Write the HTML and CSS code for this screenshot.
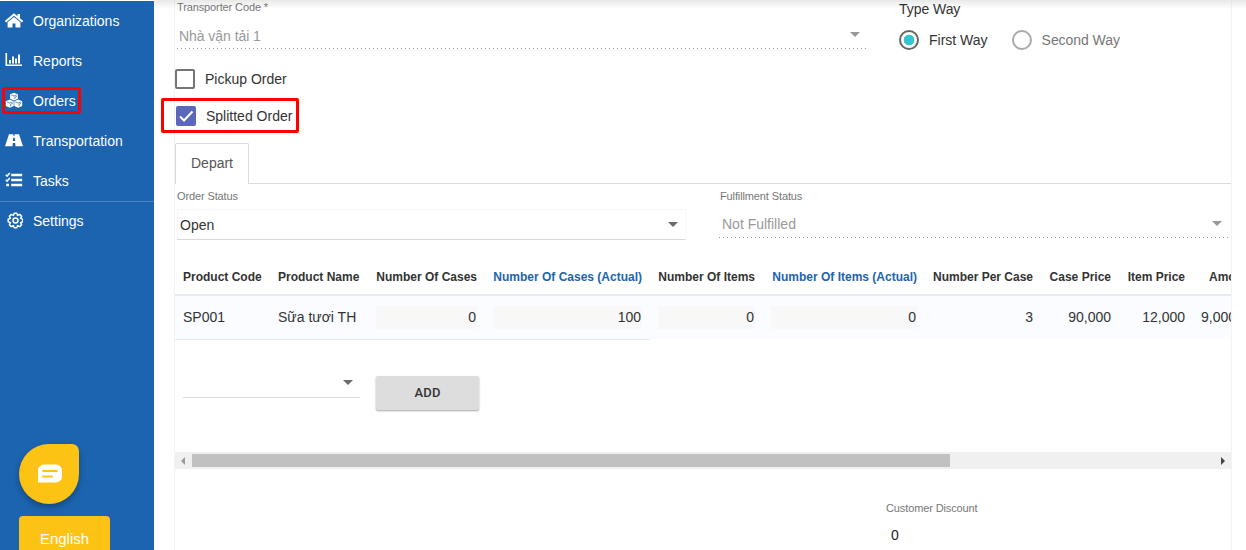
FILE: index.html
```html
<!DOCTYPE html>
<html lang="en">
<head>
<meta charset="utf-8">
<title>Order</title>
<link rel="stylesheet" href="styles.css">
</head>
<body>
<div class="app">
  <aside class="sidebar">
    <nav class="nav">
      <a class="nav-item"><svg class="icon" viewBox="0 0 18 18"><path d="M9 1.200-.2 9l1.200 1.400L9 3.700l8 6.700L18.200 9 15 6.300V2h-2.500v2.200z"/><path d="M9 4.900 2.600 10.200V15.500h4.900v-4h3v4h4.900v-5.300z"/></svg><span>Organizations</span></a>
      <a class="nav-item"><svg class="icon" viewBox="0 0 18 18"><path d="M.5 1h1.600v11.500H17V14H.5zM4 8h2v3.500H4zM7 4.500h2v7H7zM10 6.500h2v5h-2zM13 2.500h2v9h-2z"/></svg><span>Reports</span></a>
      <a class="nav-item nav-orders"><svg class="icon" viewBox="0 0 18 18"><path d="M9 .8 12.900 2.300V6.700L9 8.400 5.100 6.700V2.300zM4.800 7.600 8.700 9.200V14L4.800 15.800.8 14V9.200zM13.200 7.600 17.200 9.200V14l-4 1.800L9.300 14V9.200z"/><path class="cut" d="m6.200 2.900 2.800 1.100 2.800-1.100M9.800 6.900V5.200l2-.8M1.900 9.900l2.900 1.200 2.900-1.200M5.600 14.200v-1.900l2.100-.9M10.300 9.900l2.900 1.200 2.900-1.200M14 14.200v-1.900l2.100-.9"/></svg><span>Orders</span></a>
      <a class="nav-item"><svg class="icon" viewBox="0 0 18 18"><path fill-rule="evenodd" d="M4 2.200h4.400l-.1 1.600h1.400l-.1-1.600H14l4 12h-7.500L10.200 11H7.800l-.3 3.200H0zM8.200 5.800l-.3 3.200h2.200l-.3-3.200z"/></svg><span>Transportation</span></a>
      <a class="nav-item"><svg class="icon" viewBox="0 0 18 18"><path d="M6.200 1.700h11v2.500h-11zM6.200 6.700h11v2.500h-11zM6.200 11.700h11v2.500h-11zM1.200 11.700h2.800v2.500H1.200z"/><path class="stroke" d="m.8 2.800 1.300 1.300 2.700-3M.8 7.800l1.300 1.300 2.700-3"/></svg><span>Tasks</span></a>
      <a class="nav-item nav-settings"><svg class="icon" viewBox="0 0 18 18"><path class="stroke" stroke-linejoin="round" d="M8.400 3.400 9.200 1.200h2.600l.8 2.200 2.200-1 1.800 1.800-1 2.200 2.200.8v2.600l-2.200.8 1 2.200-1.800 1.800-2.200-1-.8 2.200H9.200l-.8-2.200-2.200 1-1.800-1.800 1-2.200-2.200-.8V7.200l2.200-.8-1-2.200 1.800-1.800z"/><circle class="stroke" cx="10.500" cy="8.500" r="2.500"/></svg><span>Settings</span></a>
    </nav>
    <div class="chat"><svg viewBox="0 0 24 19"><path fill="#fff" d="M6 .5h12a6 6 0 0 1 6 6v6a6 6 0 0 1-6 6H0v-12a6 6 0 0 1 6-6z"/><path stroke="#fcc314" stroke-width="1.800" stroke-linecap="round" d="M5 7h14M5 12.500h9"/></svg></div>
    <button class="language">English</button>
  </aside>

  <main class="content">
    <div class="panel">
      <section class="top-row">
        <div class="field transporter">
          <label class="label">Transporter Code *</label>
          <div class="select disabled"><span class="t-transporter">Nhà vận tải 1</span><i class="caret"></i></div>
        </div>
        <div class="type-way">
          <div class="type-title">Type Way</div>
          <div class="radios">
            <span class="radio checked"></span><span class="t-first">First Way</span>
            <span class="radio"></span><span class="t-second">Second Way</span>
          </div>
        </div>
      </section>

      <div class="check-row"><span class="box"></span><span>Pickup Order</span></div>
      <div class="check-row splitted"><span class="box on"><svg viewBox="0 0 20 20"><path d="m4 10.500 4 4 8.500-9"/></svg></span><span>Splitted Order</span></div>

      <div class="tabs"><div class="tab">Depart</div></div>

      <section class="status-row">
        <div class="field order-status">
          <label class="label">Order Status</label>
          <div class="select"><span>Open</span><i class="caret"></i></div>
        </div>
        <div class="field fulfillment">
          <label class="label">Fulfillment Status</label>
          <div class="select disabled"><span class="t-fulfilled">Not Fulfilled</span><i class="caret"></i></div>
        </div>
      </section>

      <section class="table-scroll">
        <div class="row head">
          <div>Product Code</div><div>Product Name</div><div class="num">Number Of Cases</div><div class="num actual">Number Of Cases (Actual)</div><div class="num">Number Of Items</div><div class="num actual">Number Of Items (Actual)</div><div class="num">Number Per Case</div><div class="num">Case Price</div><div class="num">Item Price</div><div class="amount-head">Amount</div>
        </div>
        <div class="row body">
          <div>SP001</div><div>Sữa tươi TH</div><div><span class="input">0</span></div><div><span class="input">100</span></div><div><span class="input">0</span></div><div><span class="input">0</span></div><div class="num">3</div><div class="num">90,000</div><div class="num">12,000</div><div>9,000,000</div>
        </div>
        <div class="row-line"></div>
        <div class="add-row">
          <div class="select product"><i class="caret"></i></div>
          <button class="add">ADD</button>
        </div>
      </section>
      <div class="scrollbar"><i class="arrow left"></i><div class="thumb"></div><i class="arrow right"></i></div>

      <div class="discount">
        <label class="label">Customer Discount</label>
        <div class="discount-value">0</div>
      </div>
    </div>
  </main>
</div>
<div class="top-shadow"></div>
<div class="mark mark-orders"></div>
<div class="mark mark-splitted"></div>
</body>
</html>
```
FILE: styles.css
```css
* { box-sizing: border-box; }
body { margin: 0; height: 550px; overflow: hidden; background: #fff; color: #333; font: 14px/20px "Liberation Sans", Arial, sans-serif; }
.app { display: flex; height: 550px; padding-top: 1px; overflow: hidden; }
svg { display: block; }

.sidebar { width: 154px; height: 549px; flex: none; background: #1c64b0; color: #fff; display: flex; flex-direction: column; align-items: flex-start; }
.nav { width: 100%; }
.nav-item { display: flex; align-items: center; height: 40px; padding-left: 5px; gap: 10px; }
.nav-settings { border-top: 1px solid #4c84c0; padding-bottom: 1px; }
.icon { width: 18px; height: 18px; fill: #fff; }
.stroke { fill: none; stroke: #fff; stroke-width: 1.5; }
.cut { fill: none; stroke: #1c64b0; stroke-width: .7; }
.chat { width: 60px; height: 60px; margin: 203px 0 0 19px; border-radius: 30px 7px 30px 30px; background: #fcc314; box-shadow: 0 3px 6px rgba(0,0,0,.3); display: flex; align-items: center; justify-content: center; padding: 0 0 2px 2px; flex: none; }
.chat svg { width: 24px; height: 19px; }
.language { width: 91px; height: 45px; flex: none; margin: 12px 0 0 19px; border: 0; border-radius: 4px; background: #fcc314; color: #fff; font: 15px/20px "Liberation Sans", Arial, sans-serif; padding: 0; }

.content { flex: 1; padding: 0 14px 0 20px; min-width: 0; }
.panel { width: 1058px; height: 549px; border: solid #f3f3f3; border-width: 0 1px; }
.label { display: block; font-size: 11px; line-height: 14px; color: #777; letter-spacing: -.12px; }
.select { display: flex; align-items: center; justify-content: space-between; height: 31px; border-bottom: 1px solid #dcdcdc; }
.select.disabled { color: #999; border-bottom: 0; background: repeating-linear-gradient(90deg, #999 0 1px, transparent 1px 4px) 0 100% / 100% 1px no-repeat; }
.caret { border: 5px solid transparent; border-top-color: #6a6a6a; border-bottom: 0; margin-right: 7px; }
.disabled .caret { border-top-color: #999; }

.top-row { display: flex; height: 58px; }
.transporter { width: 693px; padding-left: 2px; }
.transporter .label { margin-top: -1px; }
.transporter .select { margin-top: 4px; padding-left: 2px; }
.transporter .select span { padding-top: 5px; letter-spacing: -.05px; }
.transporter .caret { margin: 1px 8px 0 0; }
.type-way { margin-left: 31px; }
.type-title { margin-top: -2px; letter-spacing: -.05px; }
.radios { display: flex; align-items: center; height: 42px; }
.radio { width: 20px; height: 20px; border: 2px solid #aaa; border-radius: 50%; }
.radio.checked { border-color: #666; background: radial-gradient(circle, #35c5d2 0 5px, transparent 5.6px); }
.t-first, .t-second { margin-left: 10px; }
.t-first { margin-right: 24px; }
.t-second { color: #777; letter-spacing: -.05px; }

.check-row { display: flex; align-items: center; height: 38px; padding-top: 2px; gap: 10px; }
.splitted { height: 36px; padding-left: 1px; }
.box { width: 20px; height: 20px; border: 2px solid #757575; border-radius: 2px; }
.box.on { border: 0; background: #5b67bd; }
.box path { fill: none; stroke: #fff; stroke-width: 2; }

.tabs { height: 51px; padding-top: 10px; display: flex; }
.tabs::after { content: ""; flex: 1; border-bottom: 1px solid #d9dcde; }
.tab { width: 74px; height: 41px; border: 1px solid #d9dcde; border-bottom: 0; border-radius: 2px 2px 0 0; line-height: 39px; text-align: center; color: #555; }

.status-row { display: flex; height: 72px; padding: 5px 0 0 2px; }
.order-status { width: 509px; }
.order-status .select { margin-top: 6px; padding-left: 2px; border: 1px solid #f7f7f7; border-bottom-color: #d9d9d9; }
.fulfillment { width: 510px; margin-left: 33px; }
.fulfillment .label { padding-left: 1px; }
.fulfillment .select { margin-top: 4px; padding-left: 3px; }
.fulfillment .select > * { position: relative; top: 1px; }

.table-scroll { height: 196px; overflow: hidden; }
.row { display: grid; grid-template-columns: 95px 98px 117px 165px 113px 162px 116px 78px 74px 80px; align-items: center; width: 1098px; }
.row > div { padding: 0 8px; white-space: nowrap; }
.num { text-align: right; }
.head { height: 40px; padding-top: 3px; border-bottom: 2px solid #e3eaf0; font-size: 12px; font-weight: 700; }
.row > .amount-head { padding-left: 16px; }
.actual { color: #1c64b0; }
.body { height: 43px; background: #fafcff; }
.body > div { margin-top: -1px; }
.input { display: block; height: 23px; line-height: 23px; background: #f8f8f8; text-align: right; padding-right: 1px; }
.row-line { width: 475px; height: 1px; background: #e3eaf0; }
.add-row { display: flex; padding: 36px 0 0 8px; gap: 16px; }
.product { width: 177px; height: 22px; justify-content: flex-end; padding-bottom: 9px; }
.product .caret { margin-right: 7px; }
.add { width: 103px; height: 34px; border: 0; border-radius: 2px; background: #ddd; box-shadow: 0 1px 2px rgba(0,0,0,.35); font: 500 13px/20px Roboto, sans-serif; letter-spacing: .2px; color: #333; }

.scrollbar { display: flex; align-items: center; height: 17px; background: #f0f0f0; }
.thumb { width: 758px; height: 13px; margin-left: 7px; background: #c1c1c1; }
.arrow { border: 4px solid transparent; }
.left { border-right: 4px solid #999; border-left: 0; margin-left: 6px; }
.right { border-left: 4px solid #444; border-right: 0; margin-left: auto; margin-right: 6px; }
.discount { padding: 32px 0 0 711px; }
.discount-value { margin: 10px 0 0 5px; color: #222; }

.top-shadow { position: absolute; top: 0; left: 154px; right: 0; height: 9px; background: linear-gradient(rgba(0,0,0,.09), transparent); }
.mark { position: absolute; border: 3px solid #f00; border-radius: 2px; }
.mark-orders { left: 2px; top: 87px; width: 79px; height: 27px; }
.mark-splitted { left: 161px; top: 98px; width: 138px; height: 35px; }
```
